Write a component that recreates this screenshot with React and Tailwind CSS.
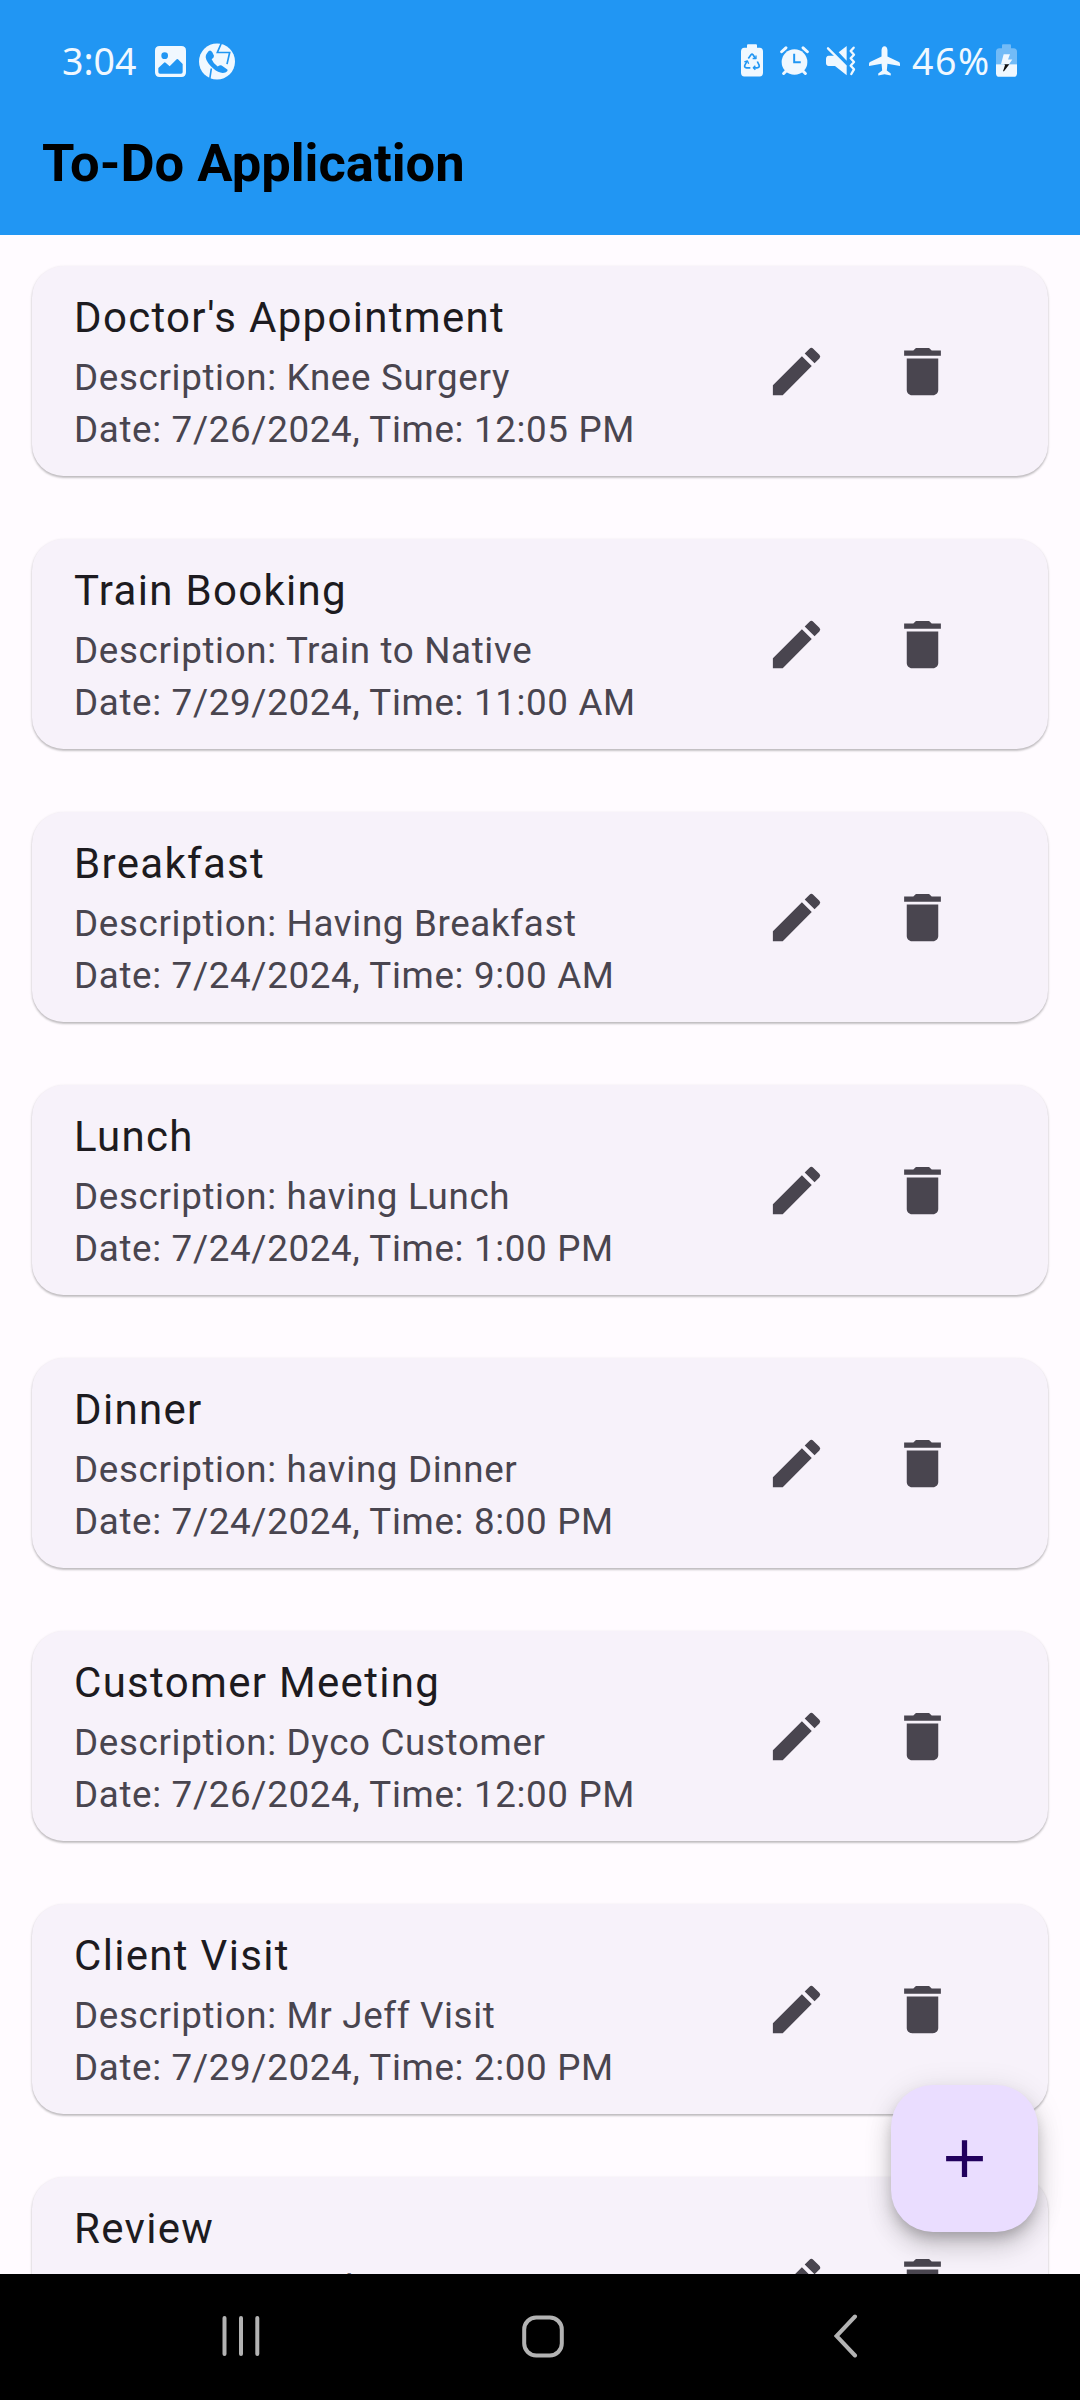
import React from "react";

const tasks = [
  ["Doctor's Appointment", "Knee Surgery", "7/26/2024", "12:05 PM"],
  ["Train Booking", "Train to Native", "7/29/2024", "11:00 AM"],
  ["Breakfast", "Having Breakfast", "7/24/2024", "9:00 AM"],
  ["Lunch", "having Lunch", "7/24/2024", "1:00 PM"],
  ["Dinner", "having Dinner", "7/24/2024", "8:00 PM"],
  ["Customer Meeting", "Dyco Customer", "7/26/2024", "12:00 PM"],
  ["Client Visit", "Mr Jeff Visit", "7/29/2024", "2:00 PM"],
  ["Review", "Code Review", "7/30/2024", "4:00 PM"],
];

const EditIcon = () => (
  <svg viewBox="0 0 24 24" className="size-[63px] fill-[#49454f]">
    <path d="M3 17.25V21h3.75L17.81 9.94l-3.75-3.75L3 17.25zM20.71 7.04a1 1 0 0 0 0-1.41l-2.34-2.34a1 1 0 0 0-1.41 0l-1.83 1.83 3.75 3.75 1.83-1.83z" />
  </svg>
);

const DeleteIcon = () => (
  <svg viewBox="0 0 24 24" className="size-[63px] fill-[#49454f]">
    <path d="M6 19c0 1.1.9 2 2 2h8c1.1 0 2-.9 2-2V7H6v12zM19 4h-3.5l-1-1h-5l-1 1H5v2h14V4z" />
  </svg>
);

function StatusBar() {
  return (
    <div className="flex h-[120px] items-center justify-between pl-[62px] pr-[63px] font-['Noto_Sans',sans-serif] text-[37.5px] text-[#f0f8ff]">
      <div className="flex items-center pt-[2px]">
        <span className="w-[93px] leading-[60px]">3:04</span>
        <svg viewBox="0 0 93 93" className="h-[31px] w-[31px]">
          <path fillRule="evenodd" fill="#f0f8ff" d="M14 0H79Q93 0 93 14V79Q93 93 79 93H14Q0 93 0 79V14Q0 0 14 0ZM29 19A10 10 0 1 0 29 39A10 10 0 1 0 29 19ZM10 66V78Q10 83 15 83H78Q83 83 83 78V54L69 40Q67 38 65 40L44 61L32 50Q29 47 27 50Z" />
        </svg>
        <svg viewBox="0 0 108 110" className="ml-[13px] h-[37px] w-[36px]">
          <circle cx="54" cy="55" r="54" fill="#f0f8ff" />
          <path d="M67 0L55 28H92L84 63M37 76L32 109" fill="none" stroke="#2196f3" strokeWidth="5" />
          <path d="M24 30Q32 16 40 27L45 38Q46 43 38 48Q43 61 56 70Q64 64 68 67L85 79Q88 83 79 88Q62 93 43 76Q22 57 20 42Q20 35 24 30Z" fill="#2196f3" />
        </svg>
      </div>
      <div className="flex items-center pt-px">
        <svg viewBox="0 0 66 98" className="h-[33px] w-[22px]">
          <path d="M21 0H45Q48 0 48 4V11H56Q66 12 66 22V86Q66 97 56 97H10Q0 97 0 86V22Q0 12 10 11H18V4Q18 0 21 0Z" fill="#f0f8ff" />
          <g fill="none" stroke="#2196f3" strokeWidth="5" strokeLinejoin="round">
            <path d="M22 43L30 32Q33 28 36 32L44 44M49 52L54 62Q57 71 48 71H38M28 71H17Q8 70 12 62L18 51" />
            <path d="M35 43H45V34M43 65L37 71L43 77M10 53L19 50L23 59" strokeWidth="4" />
          </g>
        </svg>
        <svg viewBox="0 0 88 90" className="ml-[17px] h-[30px] w-[29px]">
          <circle cx="44" cy="48" r="39" fill="#f0f8ff" />
          <path d="M5 17L18 5M83 17L70 5M11 83L22 72M77 83L66 72" stroke="#f0f8ff" strokeWidth="9" strokeLinecap="round" />
          <path d="M43 23V49H63" fill="none" stroke="#2196f3" strokeWidth="6" />
        </svg>
        <svg viewBox="0 0 90 90" className="ml-[17px] h-[30px] w-[30px]">
          <path d="M0 39Q0 30 8 29H19L30 30L62 62V88L27 60H8Q0 59 0 51ZM62 0V44L38 19Z" fill="#f0f8ff" />
          <path d="M6 7L59 60" stroke="#f0f8ff" strokeWidth="7" strokeLinecap="round" />
          <path d="M83 5L74 15L84 26L74 37L84 48L74 59L84 70L76 84" fill="none" stroke="#f0f8ff" strokeWidth="7" strokeLinecap="round" strokeLinejoin="round" />
        </svg>
        <svg viewBox="0 0 94 90" className="ml-[13px] h-[30px] w-[31px]">
          <path d="M38 12Q39 0 47 0Q55 0 56 12V31L91 48Q94 50 94 54V60L56 53L54 74L66 83V89L47 85L28 89V83L40 74L38 53L0 60V54Q0 50 3 48L38 31Z" fill="#f0f8ff" />
        </svg>
        <span className="ml-[12px] w-[79px] whitespace-nowrap leading-[60px] tracking-[1.5px]">46%</span>
        <svg viewBox="0 0 63 98" className="ml-[5px] h-[33px] w-[21px]">
          <path d="M21 0H42Q45 0 45 4V12H53Q63 13 63 22V60H0V22Q0 13 10 12H18V4Q18 0 21 0Z" fill="#72bbf7" />
          <path d="M0 60H63V87Q63 98 53 98H10Q0 98 0 87Z" fill="#f0f8ff" />
          <path d="M23 30H42L36 46H49L39 60H15Z" fill="#f0f8ff" />
          <path d="M25 60H40L24 81H21L27 63Z" fill="#111" />
        </svg>
      </div>
    </div>
  );
}

function TaskCard({ task }) {
  const [title, description, date, time] = task;
  return (
    <article className="flex h-[210px] shrink-0 justify-between rounded-[31.5px] bg-[#f7f2fa] pl-[42px] pr-[94px] shadow-[0_2px_2px_rgba(0,0,0,0.17),0_1px_3px_rgba(0,0,0,0.14)]">
      <div className="pt-[20px] text-[36.75px] leading-[52px] tracking-[0.656px] text-[#49454f]">
        <h2 className="mb-[3px] text-[42px] leading-[63px] tracking-[1.3125px] text-[#1d1b20]">{title}</h2>
        <p>Description: {description}</p>
        <p>Date: {date}, Time: {time}</p>
      </div>
      <div className="flex gap-[63px] pt-[74px]">
        <button className="h-[63px]" aria-label="Edit"><EditIcon /></button>
        <button className="h-[63px]" aria-label="Delete"><DeleteIcon /></button>
      </div>
    </article>
  );
}

export default function App() {
  return (
    <div className="relative flex h-[2400px] w-[1080px] flex-col overflow-hidden bg-[#fffbff] font-[Roboto,sans-serif]">
      <header className="h-[235px] shrink-0 bg-[#2196f3]">
        <StatusBar />
        <h1 className="pl-[42px] pt-px text-[52.5px] font-bold leading-[84px] text-black">To-Do Application</h1>
      </header>
      <main className="flex min-h-0 flex-1 flex-col gap-[63px] overflow-hidden px-[32px] pt-[31px]">
        {tasks.map((task) => <TaskCard key={task[0]} task={task} />)}
      </main>
      <button aria-label="Add task" className="absolute bottom-[168px] right-[42px] flex size-[147px] items-center justify-center rounded-[42px] bg-[#eaddff] shadow-[0_8px_13px_-3px_rgba(0,0,0,0.2),0_16px_26px_rgba(0,0,0,0.14),0_3px_30px_rgba(0,0,0,0.1)]">
        <svg viewBox="0 0 24 24" className="size-[63px] fill-[#21005d]"><path d="M19 13h-6v6h-2v-6H5v-2h6V5h2v6h6v2z" /></svg>
      </button>
      <nav className="z-10 flex h-[126px] shrink-0 items-center bg-black pb-[2px] pl-[222px]">
        <svg viewBox="0 0 38 42" className="h-[42px] w-[38px]" fill="none" stroke="#b3b3b3" strokeWidth="4" strokeLinecap="round"><path d="M2.5 3V39M19 3V39M35.3 3V39" /></svg>
        <svg viewBox="0 0 42 43" className="ml-[262px] h-[43px] w-[42px]" fill="none" stroke="#b3b3b3" strokeWidth="4"><rect x="2.2" y="2.5" width="37.6" height="38" rx="12" /></svg>
        <svg viewBox="0 0 24 44" className="ml-[270px] h-[44px] w-[24px]" fill="none" stroke="#b3b3b3" strokeWidth="4" strokeLinecap="round"><path d="M21 2.5L2.5 22L21 41.5" /></svg>
      </nav>
    </div>
  );
}
